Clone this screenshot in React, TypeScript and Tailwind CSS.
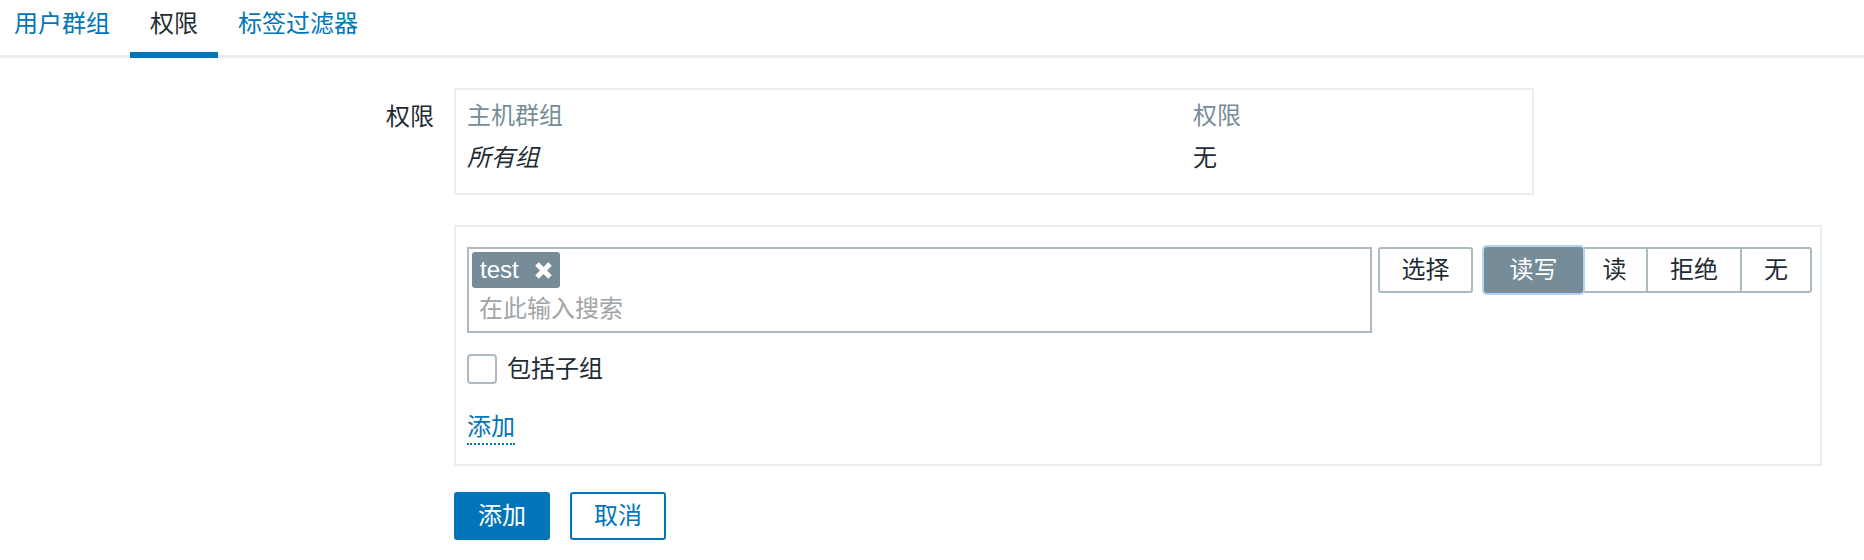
import React from "react";

const tabs = ["用户群组", "权限", "标签过滤器"];

const levels = [
  { label: "读写", w: "w-[99px]", active: true },
  { label: "读", w: "w-[67px]", active: false },
  { label: "拒绝", w: "w-[96px]", active: false },
  { label: "无", w: "w-[72px]", active: false },
];

function Tabs() {
  return (
    <ul className="flex border-b-[3px] border-[#ebeef0] -ml-[6px]">
      {tabs.map((t, i) => (
        <li
          key={t}
          className={
            i === 1
              ? "px-5 pt-2 pb-3 leading-8 border-b-[6px] border-[#0275b8] -mb-[3px] text-[#1f2c33]"
              : "px-5 pt-2 pb-3 leading-8 border-b-[6px] border-transparent -mb-[3px] text-[#0275b8]"
          }
        >
          {t}
        </li>
      ))}
    </ul>
  );
}

function PermTable() {
  return (
    <div className="w-[1080px] border-2 border-[#ebeef0] pt-[5px] pb-[14px]">
      <div className="flex h-[42px] items-center text-[#768d99]">
        <div className="w-[726px] pl-[11px]">主机群组</div>
        <div className="pl-[11px]">权限</div>
      </div>
      <div className="flex h-[42px] items-center">
        <div className="w-[726px] pl-[11px] italic">所有组</div>
        <div className="pl-[11px]">无</div>
      </div>
    </div>
  );
}

function CloseIcon() {
  return (
    <svg width="17" height="17" viewBox="0 0 17 17">
      <path d="M2 2 L15 15 M15 2 L2 15" stroke="#fff" strokeWidth="5" />
    </svg>
  );
}

function AddBlock() {
  return (
    <div className="w-[1368px] border-2 border-[#ebeef0] pt-5 pb-[19px] pl-[11px] pr-2">
      <div className="flex items-start">
        <div className="w-[905px] h-[86px] border-2 border-[#acbbc2] p-[3px]">
          <div className="inline-flex h-9 items-center gap-4 rounded-[3px] bg-[#768d99] px-2 text-white">
            <span className="leading-8">test</span>
            <CloseIcon />
          </div>
          <div className="mt-[5px] pl-[7px] leading-8 text-[#a1a4a6]">在此输入搜索</div>
        </div>
        <button className="ml-[6px] w-[95px] h-[46px] rounded-[3px] border-2 border-[#acbbc2] bg-white">
          选择
        </button>
        <div className="ml-[11px] flex">
          {levels.map((l, i) => (
            <button
              key={l.label}
              className={
                (i === 0 ? "" : "-ml-[2px] ") +
                l.w +
                (l.active
                  ? " relative z-10 h-[46px] rounded-[3px] border-2 border-[#768d99] bg-[#768d99] text-white shadow-[0_0_0_2px_#b3d4f5]"
                  : i === levels.length - 1
                  ? " h-[46px] rounded-r-[3px] border-2 border-[#acbbc2] bg-white"
                  : " h-[46px] border-2 border-[#acbbc2] bg-white")
              }
            >
              {l.label}
            </button>
          ))}
        </div>
      </div>
      <label className="mt-5 flex items-center">
        <span className="w-[30px] h-[30px] rounded-[4px] border-2 border-[#acbbc2] bg-white" />
        <span className="ml-[10px] leading-8">包括子组</span>
      </label>
      <div className="mt-6">
        <a className="inline-block leading-8 text-[#0275b8] border-b-2 border-dotted border-[#0275b8]">添加</a>
      </div>
    </div>
  );
}

export default function App() {
  return (
    <div className="w-[1864px] h-[560px] overflow-hidden bg-white text-[24px] text-[#1f2c33] font-['Liberation_Sans','Noto_Sans_CJK_SC',sans-serif]">
      <Tabs />
      <div className="mt-[30px] grid grid-cols-[434px_1fr] gap-x-5">
        <div className="pt-[13px] text-right leading-8">权限</div>
        <div>
          <PermTable />
          <div className="mt-[30px]">
            <AddBlock />
          </div>
          <div className="mt-[26px] flex gap-5">
            <button className="w-24 h-12 rounded-[3px] bg-[#0275b8] text-white">添加</button>
            <button className="w-24 h-12 rounded-[3px] border-2 border-[#0275b8] bg-white text-[#0275b8]">
              取消
            </button>
          </div>
        </div>
      </div>
    </div>
  );
}
